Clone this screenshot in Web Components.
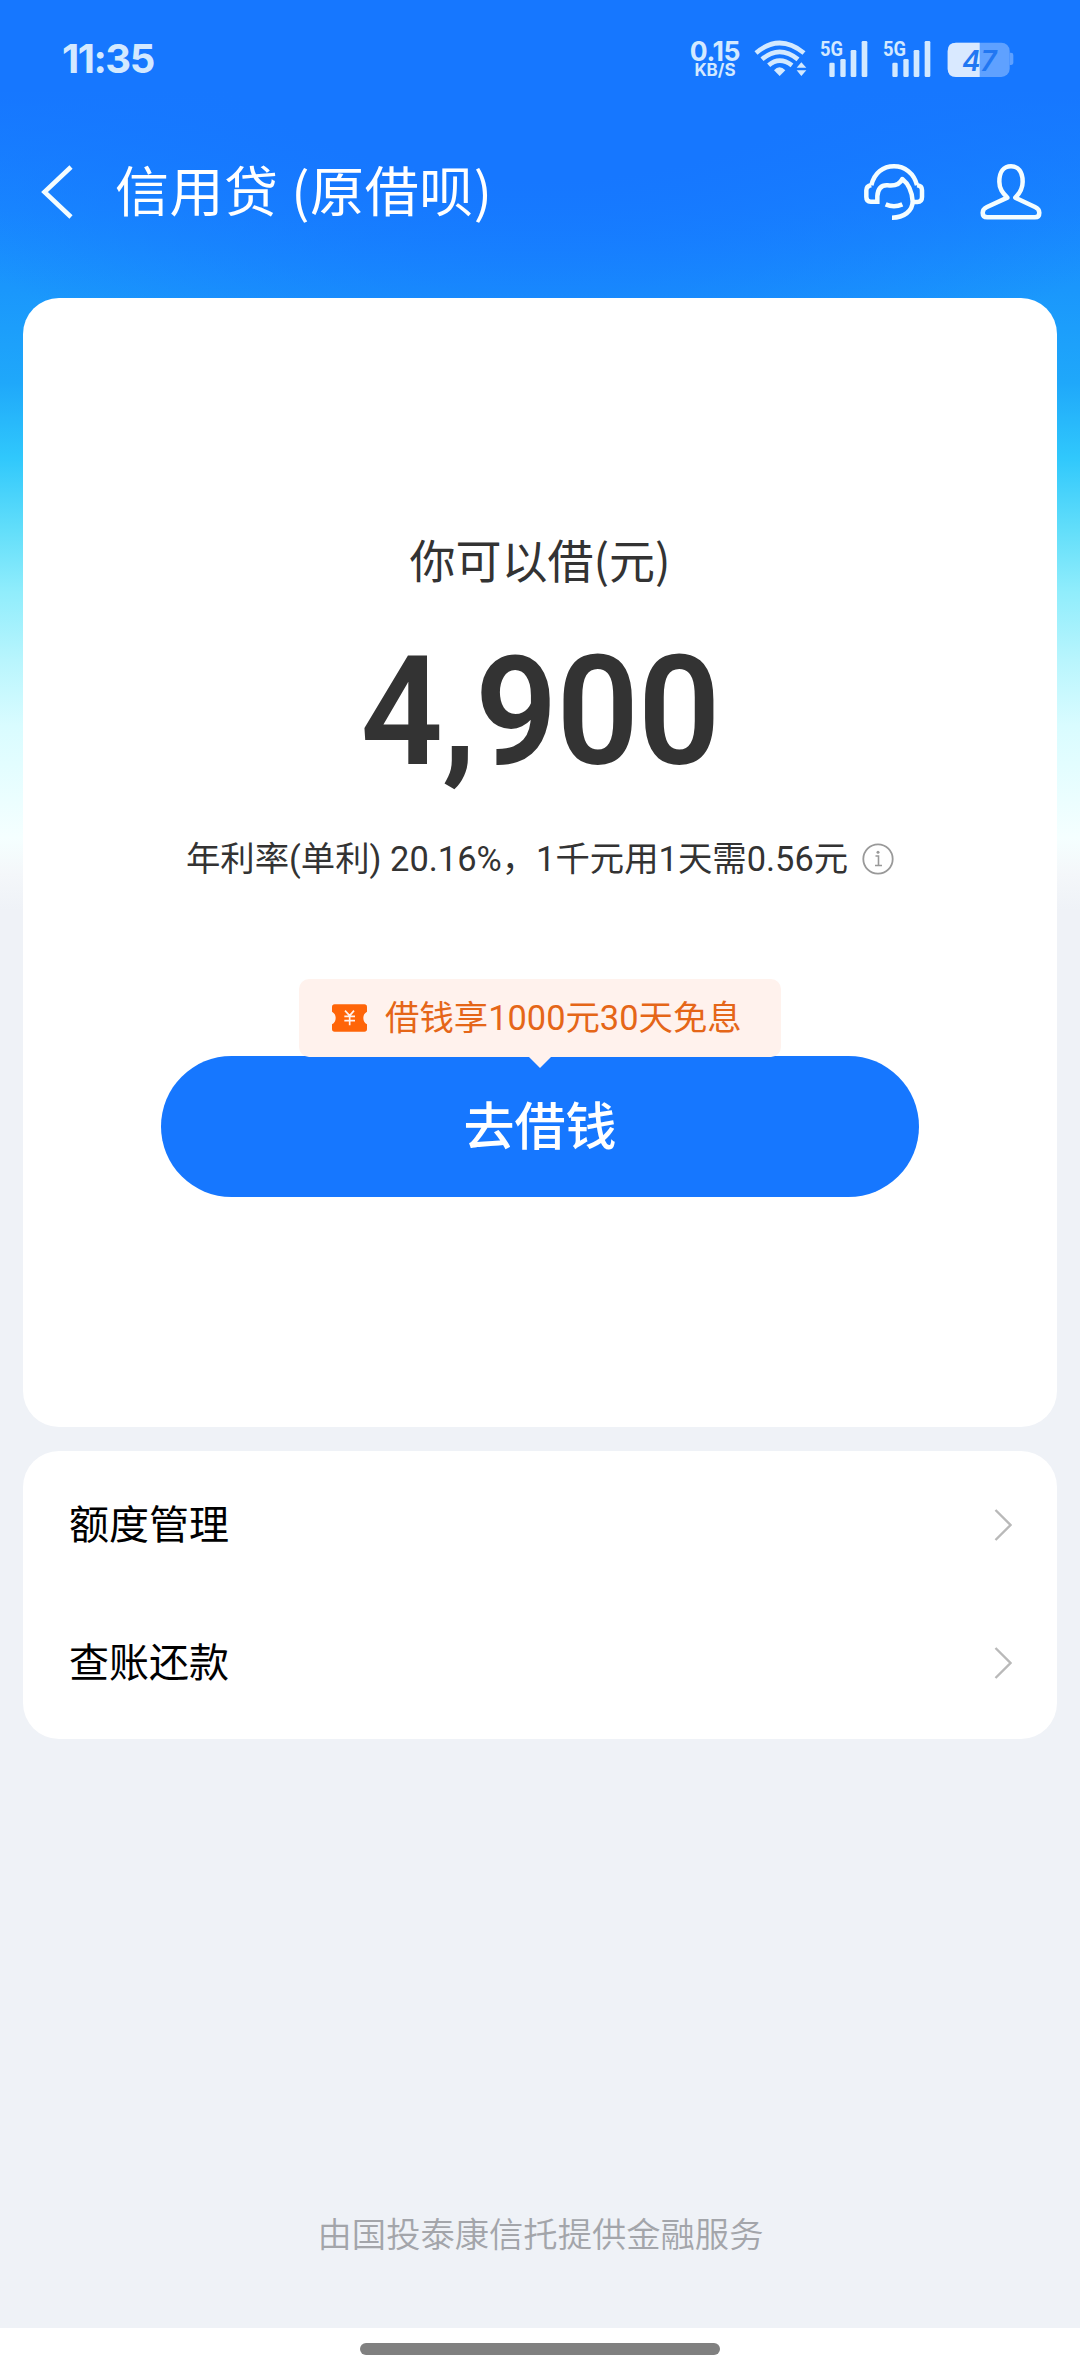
<!DOCTYPE html>
<html lang="zh-CN">
<head>
<meta charset="utf-8">
<title>信用贷</title>
<style>
html,body{margin:0;padding:0}
body{width:1080px;height:2376px;overflow:hidden;font-family:Roboto,"Noto Sans CJK SC",sans-serif;background:#eff2f7}
</style>
</head>
<body>
<loan-page></loan-page>
<script>
const define = (name, html) => customElements.define(name, class extends HTMLElement {
  constructor() {
    super();
    const t = document.createElement('template');
    t.innerHTML = html;
    this.attachShadow({mode: 'open'}).appendChild(t.content.cloneNode(true));
  }
});

define('signal-bars', `
<style>:host{display:block;width:50px;height:40px}svg{display:block;overflow:visible}text{font:700 63px Roboto,sans-serif;fill:#d3e9ff}</style>
<svg width="50" height="40" viewBox="0 0 150 120">
<text x="3" y="48" textLength="69" lengthAdjust="spacingAndGlyphs">5G</text>
<g fill="#d3e9ff"><rect x="31" y="68" width="16" height="43" rx="4"/><rect x="64" y="57" width="16" height="54" rx="4"/><rect x="95" y="30" width="17" height="81" rx="4"/><rect x="128" y="3" width="17" height="108" rx="4"/></g>
</svg>`);

define('status-bar', `
<style>
:host{display:flex;justify-content:space-between;height:118px;box-sizing:border-box;padding:40px 0 0 62px;color:#d3e9ff;font-family:Inter,sans-serif}
.time{font-size:40px;font-weight:650;line-height:38px;letter-spacing:-1.5px}
.right{display:flex;width:392px}
.speed{width:54px;margin-right:12px;display:flex;flex-direction:column;align-items:center;font-weight:600}
.speed b{font-size:26.5px;font-weight:650;line-height:22px;letter-spacing:-.4px}
.speed i{font:650 17px/14px Inter,sans-serif;margin-top:1px}
svg{display:block}
.wifi{margin-right:11px}
.s2{margin-left:13px}
.bat{margin-left:15px}
</style>
<div class="time">11:35</div>
<div class="right">
<div class="speed"><b>0.15</b><i>KB/S</i></div>
<svg class="wifi" width="54" height="40" viewBox="252 60 162 120">
<g fill="none" stroke="#d3e9ff" stroke-width="14"><path d="M258 99Q328 39 402 99"/><path d="M276 118Q328 73 384 118"/><path d="M296 136Q328 108 366 136"/></g>
<path d="M312 151Q328 133 346 151L329 168Z" fill="#d3e9ff"/>
<path d="M380 143L394 127L409 143ZM380 151L394 168L409 151Z" fill="#d3e9ff"/>
</svg>
<signal-bars></signal-bars><signal-bars class="s2"></signal-bars>
<svg class="bat" width="68" height="40" viewBox="832 60 204 120">
<rect x="834" y="68" width="186" height="103" rx="25" fill="#5fa1ff"/>
<path d="M930 68H859Q834 68 834 93V146Q834 171 859 171H930Z" fill="#d9e9ff"/>
<path d="M1020 98h4q7 0 7 7v22q0 8-7 8h-4z" fill="#5fa1ff"/>
<text x="877" y="152" font-family="Inter,sans-serif" font-style="italic" font-size="85" font-weight="600" fill="#2177f2" textLength="104" lengthAdjust="spacingAndGlyphs">47</text>
</svg>
</div>`);

define('nav-bar', `
<style>
:host{display:flex;align-items:center;height:148px;box-sizing:border-box;padding-left:38px;padding-right:36px}
svg{display:block;flex:none}
h1{margin:0 auto 6px 39px;font:400 54px/60px "Noto Sans CJK SC",sans-serif;letter-spacing:.55px;color:#fff;white-space:pre}
.head{margin-right:52px}
g,path{fill:none;stroke:#f4fdff;stroke-width:13.5;stroke-linecap:butt;stroke-linejoin:round}
</style>
<svg width="38" height="60" viewBox="0 0 38 60"><path style="stroke-width:4.6;stroke-linejoin:miter" d="M33 5L6.500 30L33 55"/></svg>
<h1>信用贷 (原借呗)</h1>
<svg class="head" width="64" height="60" viewBox="126 98 192 180">
<path d="M154 168C163 130 190 111 222 111C254 111 282 131 291 168"/>
<path d="M172 217H152Q139 217 139 203V183Q139 170 154 168"/>
<path d="M291 168Q306 169 306 183V203Q306 218 292 218H280"/>
<path d="M172 224V200C174 174 187 167 203 168C227 171 240 164 247 149C266 164 276 187 278 216C278 245 252 265 216 265"/>
<path d="M197 225Q222 236 247 225"/>
</svg>
<svg width="66" height="60" viewBox="474 98 198 180">
<path d="M562 205C548 191 538 179 538 157C538 127 552 111 573 111C594 111 608 127 608 157C608 179 600 191 586 205L645 233Q658 239 658 250Q658 264 645 264H502Q488 264 488 250Q488 239 501 233Z"/>
</svg>`);

define('coupon-bubble', `
<style>
:host{display:flex;align-items:center;width:482px;height:78px;box-sizing:border-box;padding-left:33px;background:#fff2ed;border-radius:10px;position:relative;color:#e56618;font-size:34.4px;line-height:50px}
.t{width:35px;height:28px;margin-right:18px}
.tip{position:absolute;left:229px;top:77px}
svg{display:block}
span{white-space:nowrap;margin-bottom:1px}
</style>
<svg class="t" viewBox="155 127 105 84"><path fill="#ff6508" d="M163 128H252Q260 128 260 136V150Q249 156 249 169Q249 182 260 188V202Q260 210 252 210H163Q155 210 155 202V188Q166 182 166 169Q166 156 155 150V136Q155 128 163 128Z"/><path fill="none" stroke="#fff2ed" stroke-width="5" d="M194 147L208 162L221 147M208 160V191M192 164H224M192 177H224"/></svg>
<span><slot></slot></span>
<svg class="tip" width="24" height="12" viewBox="0 0 24 12"><path d="M0 0H24L12 12Z" fill="#fff2ed"/></svg>`);

define('primary-button', `
<style>:host{display:flex;align-items:center;justify-content:center;width:758px;height:141px;box-sizing:border-box;padding-bottom:8px;border-radius:71px;background:#1677ff;color:#fff;font:500 51px/60px "Noto Sans CJK SC",sans-serif}</style>
<slot></slot>`);

define('credit-card', `
<style>
:host{display:flex;flex-direction:column;align-items:center;height:1129px;box-sizing:border-box;background:#fff;border-radius:36px;padding-top:230px;color:#333}
.label{font:400 46px/60px "Noto Sans CJK SC",sans-serif}
.amount{font:600 152px/160px Roboto,sans-serif;margin-top:44px;letter-spacing:-1px;transform:scaleX(.95)}
.rate{display:flex;align-items:center;font-size:34.4px;line-height:50px;margin-top:42px;white-space:pre}
.rate svg{margin-left:14px}
coupon-bubble{margin-top:95px;z-index:1}
primary-button{margin-top:-1px}
</style>
<div class="label">你可以借(元)</div>
<div class="amount">4,900</div>
<div class="rate"><span>年利率(单利) 20.16%，1千元用1天需0.56元</span><svg width="32" height="32" viewBox="0 0 32 32"><circle cx="16" cy="16" r="14.700" fill="none" stroke="#999" stroke-width="1.800"/><path d="M13.500 13H16.500V22M13 22.500H20" fill="none" stroke="#999" stroke-width="1.600"/><circle cx="16" cy="9.300" r="1.500" fill="#999"/></svg></div>
<coupon-bubble>借钱享1000元30天免息</coupon-bubble>
<primary-button>去借钱</primary-button>`);

define('menu-row', `
<style>:host{display:flex;align-items:center;justify-content:space-between;height:138px;padding:0 45px 0 46px;color:#000;font:400 40px/50px "Noto Sans CJK SC",sans-serif}svg{display:block}span{margin-bottom:6px}</style>
<span><slot></slot></span>
<svg width="20" height="34" viewBox="0 0 20 34"><path d="M3.500 2L18.500 17L3.500 32" fill="none" stroke="#b9b9b9" stroke-width="2.400"/></svg>`);

define('menu-card', `
<style>:host{display:block;height:288px;box-sizing:border-box;padding:5px 0;background:#fff;border-radius:36px}</style>
<slot></slot>`);

define('loan-page', `
<style>
:host{display:flex;flex-direction:column;height:2376px;
background:radial-gradient(ellipse 760px 400px at 540px 0,#1677ff 45%,rgba(22,119,255,0) 100%) no-repeat 0 0/1080px 400px,
linear-gradient(180deg,#1677ff 0,#1677ff 90px,#1888ff 210px,#1a97fc 290px,#1fa8fa 383px,#30c8fc 458px,#62defa 530px,#90edfc 592px,#b8f5fd 660px,#d9fcff 726px,#f5ffff 838px,#f4f7fa 874px,#eff2f7 910px)}
main{display:flex;flex-direction:column;gap:24px;padding:32px 23px 0}
footer{margin-top:auto;text-align:center;font:350 34.3px/50px "Noto Sans CJK SC",sans-serif;color:#a3a5aa;padding-bottom:71px;padding-left:1px}
.home{height:48px;background:#fff;display:flex;justify-content:center;align-items:flex-start}
.home i{width:360px;height:12px;margin-top:15px;border-radius:6px;background:#808080}
</style>
<status-bar></status-bar>
<nav-bar></nav-bar>
<main>
<credit-card></credit-card>
<menu-card><menu-row>额度管理</menu-row><menu-row>查账还款</menu-row></menu-card>
</main>
<footer>由国投泰康信托提供金融服务</footer>
<div class="home"><i></i></div>`);
</script>
</body>
</html>
